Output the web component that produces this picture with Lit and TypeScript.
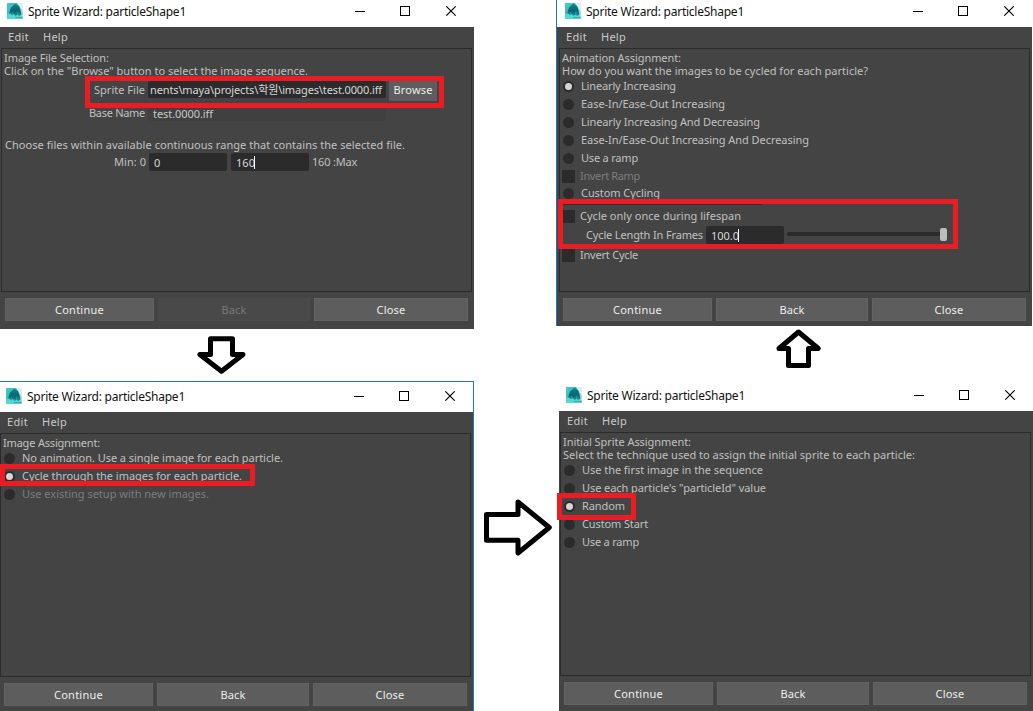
import { LitElement, html, css } from "lit";
import { customElement, property } from "lit/decorators.js";

/** A single line of text tracked out (or in) to a given width. */
@customElement("fit-text")
class FitText extends LitElement {
  @property({ type: Number }) w = 0;
  @property() text = "";
  static styles = css`
    :host { display: inline-block; white-space: pre; }
  `;
  updated() {
    this.style.letterSpacing = "0px";
    const natural = this.getBoundingClientRect().width;
    const n = [...this.text].length;
    if (this.w && n) this.style.letterSpacing = `${(this.w - natural) / n}px`;
  }
  render() {
    return html`<span>${this.text}</span>`;
  }
}

const t = (text: string, w: number) => html`<fit-text .text=${text} .w=${w}></fit-text>`;

@customElement("wizard-window")
class WizardWindow extends LitElement {
  @property({ type: Boolean }) backDisabled = false;
  static styles = css`
    :host { display: flex; flex-direction: column; box-sizing: border-box; background: #fff; }
    .title { height: 27px; flex: none; display: flex; align-items: flex-start; color: #111; font-size: 12px; padding-left: calc(7px + var(--inset, 0px)); box-sizing: border-box; }
    .logo { width: 16px; height: 16px; margin-top: 3px; flex: none; }
    .name { margin-left: 5px; line-height: 23px; flex: 1; }
    .controls { width: 101px; height: 10px; margin: 6px 18px 0 0; flex: none; }
    .body { flex: 1; display: flex; flex-direction: column; background: #444; box-sizing: border-box; padding-left: var(--inset, 0px); }
    .menu { height: 21px; flex: none; display: flex; gap: 14px; padding-left: 8px; line-height: 20px; color: #cacaca; }
    .frame { height: 244px; flex: none; box-sizing: border-box; border: 1px solid #2b2b2b; margin: 0 2px 0 1px; padding: 2px 0 0 2px; }
    .buttons { display: grid; grid-template-columns: 149px 152px 154px; gap: 4px; padding: 6px 0 0 5px; }
    .btn { height: 23px; line-height: 24px; background: #5d5d5d; color: #eee; text-align: center; box-shadow: inset 0 0 0 1px #626262; }
    .off { background: #494949; color: #787878; box-shadow: inset 0 0 0 1px #4b4b4b; }
  `;
  render() {
    return html`
      <div class="title">
        <svg class="logo" viewBox="0 0 16 16">
          <defs>
            <linearGradient id="g" x1="0" y1="0" x2="1" y2=".9">
              <stop offset="0" stop-color="#3fd0cc" />
              <stop offset=".5" stop-color="#35b4b6" />
              <stop offset="1" stop-color="#d5f0f0" />
            </linearGradient>
            <linearGradient id="m" x1="0" y1="0" x2="0" y2="1">
              <stop offset="0" stop-color="#0f8189" />
              <stop offset=".6" stop-color="#0a6470" />
              <stop offset="1" stop-color="#1c969c" />
            </linearGradient>
          </defs>
          <rect width="16" height="16" fill="url(#g)" />
          <path d="M10 0H16V9L12.3 3.6Z" fill="#d8f1f1" />
          <path d="M0 16V12L3 9L13 11L16 14V16Z" fill="#4fd8d4" />
          <path d="M2 10.5L4 4.5L8.3 .8L12.3 3.6L14.6 11.5L12.2 13L10.4 11.5L8.8 13L6.6 11L5 12.2L3.6 10.8Z" fill="url(#m)" />
          <path d="M5.3 9V12M10.9 8.5V12" stroke="#2fa9ae" stroke-width=".8" />
          <path d="M8 14.5H15" stroke="#5b8f92" stroke-width=".8" />
        </svg>
        <span class="name">${t("Sprite Wizard: particleShape1", 158)}</span>
        <svg class="controls" viewBox="0 0 101 10" fill="none" stroke="#000">
          <path d="M0 5.5H10" />
          <rect x="45.5" y=".5" width="9" height="9" />
          <path d="M91.3 .3L100.7 9.7M100.7 .3L91.3 9.7" stroke-width="1.1" />
        </svg>
      </div>
      <div class="body">
        <div class="menu">${t("Edit", 21)}${t("Help", 25)}</div>
        <div class="frame"><slot></slot></div>
        <div class="buttons">
          <div class="btn">${t("Continue", 49)}</div>
          <div class="btn ${this.backDisabled ? "off" : ""}">${t("Back", 25)}</div>
          <div class="btn">${t("Close", 29)}</div>
        </div>
      </div>
    `;
  }
}

@customElement("app-root")
class AppRoot extends LitElement {
  static styles = css`
    :host {
      display: block; position: relative; width: 1033px; height: 711px; overflow: hidden; background: #fff;
      font-family: "Noto Sans", "Noto Sans CJK KR", sans-serif; font-size: 11px; color: #c0c0c0;
    }
    wizard-window { position: absolute; }
    .files { left: 0; top: 0; width: 474px; height: 329px; }
    .image { left: -1px; top: 381px; width: 475px; height: 330px; border: solid #2277b3; border-width: 1px 1px 0 0; padding-top: 3px; }
    .anim { left: 556px; top: 0; width: 476px; height: 326px; border-left: 1px solid #2277b3; --inset: 1px; }
    .initial { left: 559px; top: 384px; width: 474px; height: 327px; }
    .line { height: 13px; line-height: 13px; }
    .opt { display: flex; height: 18px; line-height: 18px; }
    .tight { height: 17px; }
    .after { margin-top: 5px; }
    .last { margin-top: 2px; }
    .dim { color: #7c7c7c; }
    .radio { width: 11px; height: 11px; border-radius: 50%; background: #2b2b2b; margin: 4px 7px 0 1px; flex: none; box-sizing: border-box; }
    .on { background: #d6d6d6; border: 2px solid #2b2b2b; }
    .check { width: 13px; height: 13px; background: #2b2b2b; margin: 3px 5px 0 0; flex: none; }
    .row { display: flex; align-items: flex-start; }
    .label { display: flex; justify-content: flex-end; line-height: 18px; }
    .field { background: #2b2b2b; color: #d8d8d8; border-radius: 2px; height: 18px; line-height: 20px; box-sizing: border-box; white-space: nowrap; overflow: hidden; display: flex; padding-left: 5px; width: 78px; }
    .path { width: 238px; height: 17px; margin: 0 3px; padding-left: 2px; line-height: 17px; }
    .base { width: 238px; height: 16px; margin-left: 3px; background: #404040; color: #c8c8c8; line-height: 17px; }
    .wide { width: 141px; }
    .browse { width: 48px; height: 20px; background: #5d5d5d; color: #eee; text-align: center; line-height: 18px; }
    .sprite { margin-top: 4px; }
    .name { margin-top: 4px; }
    .name .label { line-height: 16px; }
    .choose { margin: 17px 0 0 1px; }
    .range { margin-top: 2px; }
    .min { width: 142px; margin-right: 3px; }
    .second { margin: 0 3px 0 4px; }
    .caret { width: 1px; height: 13px; background: #fff; margin: 3px 0 0 -1px; }
    .length { margin-top: 1px; height: 18px; }
    .len { width: 141px; margin-right: 3px; }
    .track { width: 160px; height: 4px; border-radius: 2px; background: #2b2b2b; margin: 6px 0 0 3px; display: flex; justify-content: flex-end; }
    .thumb { width: 7px; height: 13px; border-radius: 2px; background: #bdbdbd; margin-top: -4px; flex: none; }
    .mark { position: absolute; border: 5px solid #ea1c24; box-sizing: border-box; }
    .m1 { left: 85px; top: 76px; width: 359px; height: 32px; }
    .m2 { left: 0; top: 464px; width: 255px; height: 22px; }
    .m3 { left: 558px; top: 199px; width: 400px; height: 50px; }
    .m4 { left: 557px; top: 493px; width: 79px; height: 27px; }
    .edge { position: absolute; left: 563px; top: 204px; width: 199px; height: 1px; background: #2e2e2e; }
    .arrows { position: absolute; inset: 0; width: 1033px; height: 711px; pointer-events: none; }
  `;

  radio(text: string, w: number, on = false, dim = false) {
    return html`<div class="opt ${dim ? "dim" : ""}"><i class="radio ${on ? "on" : ""}"></i>${t(text, w)}</div>`;
  }
  check(text: string, w: number, cls = "") {
    return html`<div class="opt ${cls}"><i class="check"></i>${t(text, w)}</div>`;
  }
  render() {
    return html`
      <wizard-window class="files" .backDisabled=${true}>
        <div class="line">${t("Image File Selection:", 105)}</div>
        <div class="line">${t("Click on the \"Browse\" button to select the image sequence.", 304)}</div>
        <div class="row sprite">
          <div class="label wide">${t("Sprite File", 51)}</div>
          <div class="field path">${t("nents\\maya\\projects\\학원\\images\\test.0000.iff", 232)}</div>
          <div class="browse">${t("Browse", 39)}</div>
        </div>
        <div class="row name">
          <div class="label wide">${t("Base Name", 56)}</div>
          <div class="field base">${t("test.0000.iff", 60)}</div>
        </div>
        <div class="line choose">${t("Choose files within available continuous range that contains the selected file.", 400)}</div>
        <div class="row range">
          <div class="label min">${t("Min: 0", 32)}</div>
          <div class="field">${t("0", 7)}</div>
          <div class="field second">${t("160", 19)}<i class="caret"></i></div>
          <div class="label">${t("160 :Max", 45)}</div>
        </div>
      </wizard-window>

      <wizard-window class="anim">
        <div class="line">${t("Animation Assignment:", 119)}</div>
        <div class="line">${t("How do you want the images to be cycled for each particle?", 306)}</div>
        <div class="list">
          ${this.radio("Linearly Increasing", 95, true)}
          ${this.radio("Ease-In/Ease-Out Increasing", 144)}
          ${this.radio("Linearly Increasing And Decreasing", 179)}
          ${this.radio("Ease-In/Ease-Out Increasing And Decreasing", 228)}
          ${this.radio("Use a ramp", 57)}
          ${this.check("Invert Ramp", 60, "dim tight")}
          ${this.radio("Custom Cycling", 79)}
          ${this.check("Cycle only once during lifespan", 161, "after")}
          <div class="row length">
            <div class="label len">${t("Cycle Length In Frames", 117)}</div>
            <div class="field">${t("100.0", 28)}<i class="caret"></i></div>
            <div class="track"><i class="thumb"></i></div>
          </div>
          ${this.check("Invert Cycle", 58, "last")}
        </div>
      </wizard-window>

      <wizard-window class="image">
        <div class="line">${t("Image Assignment:", 97)}</div>
        <div class="list">
          ${this.radio("No animation. Use a single image for each particle.", 261)}
          ${this.radio("Cycle through the images for each particle.", 220, true)}
          ${this.radio("Use existing setup with new images.", 187, false, true)}
        </div>
      </wizard-window>

      <wizard-window class="initial">
        <div class="line">${t("Initial Sprite Assignment:", 128)}</div>
        <div class="line">${t("Select the technique used to assign the initial sprite to each particle:", 352)}</div>
        <div class="list">
          ${this.radio("Use the first image in the sequence", 181)}
          ${this.radio("Use each particle's \"particleId\" value", 184)}
          ${this.radio("Random", 43, true)}
          ${this.radio("Custom Start", 66)}
          ${this.radio("Use a ramp", 57)}
        </div>
      </wizard-window>

      <div class="mark m1"></div>
      <div class="mark m2"></div>
      <div class="mark m3"></div>
      <div class="mark m4"></div>
      <div class="edge"></div>
      <svg class="arrows" viewBox="0 0 1033 711" fill="#fff" stroke="#000" stroke-width="5" stroke-linejoin="round">
        <path d="M210.5 338.8H232.5V354.5H243L221.5 371.2L199.8 354.5H210.5Z" />
        <path d="M798.5 332L818.3 348.5H808.5V365.5H788.5V348.5H779Z" />
        <path d="M486.5 514.5H518V502L549.3 527.5L518 553V540.2H486.5Z" />
      </svg>
    `;
  }
}
